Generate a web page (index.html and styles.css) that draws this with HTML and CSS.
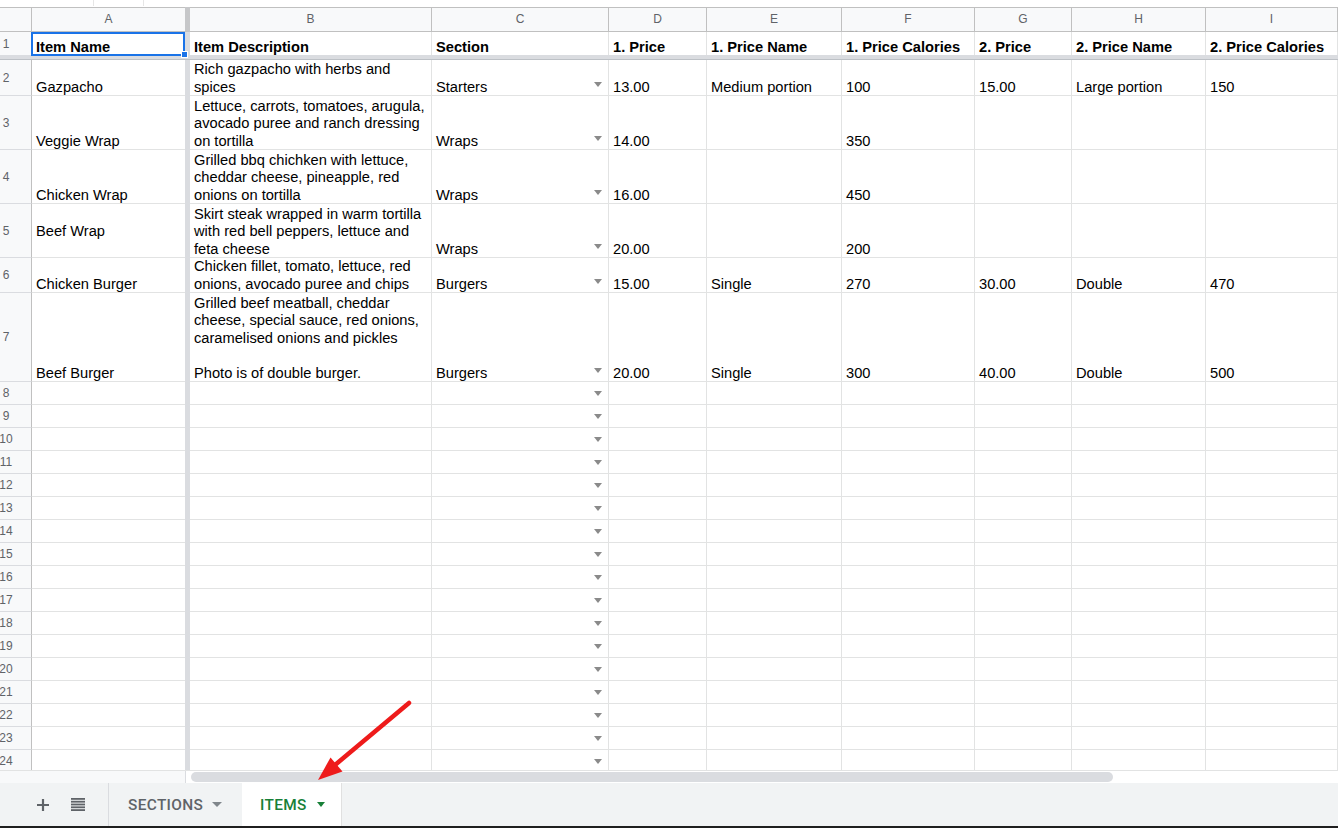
FILE: index.html
```html
<!DOCTYPE html>
<html lang="en">
<head>
    <meta charset="UTF-8">
    <meta name="viewport" content="width=device-width, initial-scale=1.0">
    <title>Menu - Items</title>
    <link rel="stylesheet" href="styles.css">
</head>
<body>
    <div class="toolbar-edge"><span class="edge-box"></span></div>

    <div class="sheet">
        <div class="row head-row">
            <div class="corner"></div>
            <div class="col-head frozen">A</div>
            <div class="col-head">B</div>
            <div class="col-head">C</div>
            <div class="col-head">D</div>
            <div class="col-head">E</div>
            <div class="col-head">F</div>
            <div class="col-head">G</div>
            <div class="col-head">H</div>
            <div class="col-head">I</div>
        </div>

        <div class="row r1">
            <div class="rh">1</div>
            <div class="c frozen sel">Item Name</div>
            <div class="c">Item Description</div>
            <div class="c">Section</div>
            <div class="c">1. Price</div>
            <div class="c">1. Price Name</div>
            <div class="c">1. Price Calories</div>
            <div class="c">2. Price</div>
            <div class="c">2. Price Name</div>
            <div class="c">2. Price Calories</div>
        </div>
        <div class="freeze-line"></div>

        <div class="row h36">
            <div class="rh">2</div>
            <div class="c frozen">Gazpacho</div>
            <div class="c">Rich gazpacho with herbs and<br>spices</div>
            <div class="c dd"><span>Starters</span><i class="caret"></i></div>
            <div class="c">13.00</div>
            <div class="c">Medium portion</div>
            <div class="c">100</div>
            <div class="c">15.00</div>
            <div class="c">Large portion</div>
            <div class="c">150</div>
        </div>
        <div class="row h54">
            <div class="rh">3</div>
            <div class="c frozen">Veggie Wrap</div>
            <div class="c">Lettuce, carrots, tomatoes, arugula,<br>avocado puree and ranch dressing<br>on tortilla</div>
            <div class="c dd"><span>Wraps</span><i class="caret"></i></div>
            <div class="c">14.00</div>
            <div class="c"></div>
            <div class="c">350</div>
            <div class="c"></div>
            <div class="c"></div>
            <div class="c"></div>
        </div>
        <div class="row h54">
            <div class="rh">4</div>
            <div class="c frozen">Chicken Wrap</div>
            <div class="c">Grilled bbq chichken with lettuce,<br>cheddar cheese, pineapple, red<br>onions on tortilla</div>
            <div class="c dd"><span>Wraps</span><i class="caret"></i></div>
            <div class="c">16.00</div>
            <div class="c"></div>
            <div class="c">450</div>
            <div class="c"></div>
            <div class="c"></div>
            <div class="c"></div>
        </div>
        <div class="row h54">
            <div class="rh">5</div>
            <div class="c frozen">Beef Wrap<br>&nbsp;</div>
            <div class="c">Skirt steak wrapped in warm tortilla<br>with red bell peppers, lettuce and<br>feta cheese</div>
            <div class="c dd"><span>Wraps</span><i class="caret"></i></div>
            <div class="c">20.00</div>
            <div class="c"></div>
            <div class="c">200</div>
            <div class="c"></div>
            <div class="c"></div>
            <div class="c"></div>
        </div>
        <div class="row h35">
            <div class="rh">6</div>
            <div class="c frozen">Chicken Burger</div>
            <div class="c">Chicken fillet, tomato, lettuce, red<br>onions, avocado puree and chips</div>
            <div class="c dd"><span>Burgers</span><i class="caret"></i></div>
            <div class="c">15.00</div>
            <div class="c">Single</div>
            <div class="c">270</div>
            <div class="c">30.00</div>
            <div class="c">Double</div>
            <div class="c">470</div>
        </div>
        <div class="row h89">
            <div class="rh">7</div>
            <div class="c frozen">Beef Burger</div>
            <div class="c">Grilled beef meatball, cheddar<br>cheese, special sauce, red onions,<br>caramelised onions and pickles<br>&nbsp;<br>Photo is of double burger.</div>
            <div class="c dd"><span>Burgers</span><i class="caret"></i></div>
            <div class="c">20.00</div>
            <div class="c">Single</div>
            <div class="c">300</div>
            <div class="c">40.00</div>
            <div class="c">Double</div>
            <div class="c">500</div>
        </div>

        <!-- empty rows -->
        <div class="row"><div class="rh">8</div><div class="c frozen"></div><div class="c"></div><div class="c dd"><i class="caret"></i></div><div class="c"></div><div class="c"></div><div class="c"></div><div class="c"></div><div class="c"></div><div class="c"></div></div>
        <div class="row"><div class="rh">9</div><div class="c frozen"></div><div class="c"></div><div class="c dd"><i class="caret"></i></div><div class="c"></div><div class="c"></div><div class="c"></div><div class="c"></div><div class="c"></div><div class="c"></div></div>
        <div class="row"><div class="rh">10</div><div class="c frozen"></div><div class="c"></div><div class="c dd"><i class="caret"></i></div><div class="c"></div><div class="c"></div><div class="c"></div><div class="c"></div><div class="c"></div><div class="c"></div></div>
        <div class="row"><div class="rh">11</div><div class="c frozen"></div><div class="c"></div><div class="c dd"><i class="caret"></i></div><div class="c"></div><div class="c"></div><div class="c"></div><div class="c"></div><div class="c"></div><div class="c"></div></div>
        <div class="row"><div class="rh">12</div><div class="c frozen"></div><div class="c"></div><div class="c dd"><i class="caret"></i></div><div class="c"></div><div class="c"></div><div class="c"></div><div class="c"></div><div class="c"></div><div class="c"></div></div>
        <div class="row"><div class="rh">13</div><div class="c frozen"></div><div class="c"></div><div class="c dd"><i class="caret"></i></div><div class="c"></div><div class="c"></div><div class="c"></div><div class="c"></div><div class="c"></div><div class="c"></div></div>
        <div class="row"><div class="rh">14</div><div class="c frozen"></div><div class="c"></div><div class="c dd"><i class="caret"></i></div><div class="c"></div><div class="c"></div><div class="c"></div><div class="c"></div><div class="c"></div><div class="c"></div></div>
        <div class="row"><div class="rh">15</div><div class="c frozen"></div><div class="c"></div><div class="c dd"><i class="caret"></i></div><div class="c"></div><div class="c"></div><div class="c"></div><div class="c"></div><div class="c"></div><div class="c"></div></div>
        <div class="row"><div class="rh">16</div><div class="c frozen"></div><div class="c"></div><div class="c dd"><i class="caret"></i></div><div class="c"></div><div class="c"></div><div class="c"></div><div class="c"></div><div class="c"></div><div class="c"></div></div>
        <div class="row"><div class="rh">17</div><div class="c frozen"></div><div class="c"></div><div class="c dd"><i class="caret"></i></div><div class="c"></div><div class="c"></div><div class="c"></div><div class="c"></div><div class="c"></div><div class="c"></div></div>
        <div class="row"><div class="rh">18</div><div class="c frozen"></div><div class="c"></div><div class="c dd"><i class="caret"></i></div><div class="c"></div><div class="c"></div><div class="c"></div><div class="c"></div><div class="c"></div><div class="c"></div></div>
        <div class="row"><div class="rh">19</div><div class="c frozen"></div><div class="c"></div><div class="c dd"><i class="caret"></i></div><div class="c"></div><div class="c"></div><div class="c"></div><div class="c"></div><div class="c"></div><div class="c"></div></div>
        <div class="row"><div class="rh">20</div><div class="c frozen"></div><div class="c"></div><div class="c dd"><i class="caret"></i></div><div class="c"></div><div class="c"></div><div class="c"></div><div class="c"></div><div class="c"></div><div class="c"></div></div>
        <div class="row"><div class="rh">21</div><div class="c frozen"></div><div class="c"></div><div class="c dd"><i class="caret"></i></div><div class="c"></div><div class="c"></div><div class="c"></div><div class="c"></div><div class="c"></div><div class="c"></div></div>
        <div class="row"><div class="rh">22</div><div class="c frozen"></div><div class="c"></div><div class="c dd"><i class="caret"></i></div><div class="c"></div><div class="c"></div><div class="c"></div><div class="c"></div><div class="c"></div><div class="c"></div></div>
        <div class="row"><div class="rh">23</div><div class="c frozen"></div><div class="c"></div><div class="c dd"><i class="caret"></i></div><div class="c"></div><div class="c"></div><div class="c"></div><div class="c"></div><div class="c"></div><div class="c"></div></div>
        <div class="row"><div class="rh">24</div><div class="c frozen"></div><div class="c"></div><div class="c dd"><i class="caret"></i></div><div class="c"></div><div class="c"></div><div class="c"></div><div class="c"></div><div class="c"></div><div class="c"></div></div>
    </div>

    <div class="scroll-row">
        <div class="scroll-left"></div>
        <div class="scroll-track"><div class="scroll-thumb"></div></div>
    </div>

    <div class="tab-bar">
        <div class="tab-tools">
            <svg class="tool" width="12" height="12" viewBox="0 0 12 12">
                <path d="M6 0v12M0 6h12" stroke="#5f6368" stroke-width="2.2" fill="none"/>
            </svg>
            <svg class="tool" width="14" height="13" viewBox="0 0 14 13">
                <rect x="0" y="0" width="14" height="1.8" fill="#5f6368"/>
                <rect x="0" y="2.8" width="14" height="1.8" fill="#5f6368"/>
                <rect x="0" y="5.6" width="14" height="1.8" fill="#5f6368"/>
                <rect x="0" y="8.4" width="14" height="1.8" fill="#5f6368"/>
                <rect x="0" y="11.2" width="14" height="1.8" fill="#5f6368"/>
            </svg>
        </div>
        <div class="tab">SECTIONS<i class="tab-caret"></i></div>
        <div class="tab active">ITEMS<i class="tab-caret"></i></div>
    </div>
    <div class="bottom-edge"></div>

    <svg class="pointer" width="1338" height="828" viewBox="0 0 1338 828">
        <path d="M409 703 L335 765" stroke="#ee1b1b" stroke-width="4.5" stroke-linecap="round" fill="none"/>
        <polygon points="318,780 342.5,771.5 330.5,757.5" fill="#ee1b1b"/>
    </svg>
</body>
</html>
```

FILE: styles.css
```css
body {
    margin: 0;
    width: 1338px;
    height: 828px;
    overflow: hidden;
    position: relative;
    background: #fff;
    font-family: "Liberation Sans", Arial, sans-serif;
    color: #000;
}

/* bit of the toolbar cut off at the top */
.toolbar-edge {
    height: 7px;
    padding-left: 93px;
}

.edge-box {
    display: inline-block;
    vertical-align: top;
    width: 49px;
    height: 6px;
    border-left: 1px solid #e6e6e6;
    border-right: 1px solid #e6e6e6;
}

/* grid */
.sheet {
    height: 763px;
    overflow: hidden;
}

.row {
    display: grid;
    grid-template-columns: 32px 158px 242px 177px 98px 135px 133px 97px 134px 132px;
    height: 23px;
}

.head-row { height: 25px; }
.r1 { height: 24px; }
.h35 { height: 35px; }
.h36 { height: 36px; }
.h54 { height: 54px; }
.h89 { height: 89px; }

.corner,
.col-head {
    box-sizing: border-box;
    background: #f8f9fa;
    border-right: 1px solid #c0c0c0;
    border-bottom: 1px solid #c0c0c0;
    box-shadow: inset 0 1px #c0c0c0;
}

.col-head {
    display: flex;
    align-items: center;
    justify-content: center;
    font-size: 12px;
    color: #5f6368;
}

.col-head.frozen {
    border-right: 5px solid #c6c7c9;
}

.rh {
    box-sizing: border-box;
    background: #f8f9fa;
    border-right: 1px solid #c0c0c0;
    border-bottom: 1px solid #dadce0;
    display: flex;
    align-items: center;
    justify-content: center;
    padding-right: 19px;
    font-size: 12px;
    color: #5f6368;
}

/* grid line drawn as inset shadow so the text sits on the bottom pixel */
.c {
    box-sizing: border-box;
    border-right: 1px solid #e2e3e3;
    box-shadow: inset 0 -1px #e2e3e3;
    padding: 0 3px 0 4px;
    display: flex;
    align-items: flex-end;
    font-size: 14.67px;
    line-height: 17.5px;
    white-space: nowrap;
}

.c.frozen {
    border-right: 5px solid #dadce0;
}

.r1 .c {
    font-weight: bold;
    box-shadow: none;
}

.r1 .rh {
    border-bottom: 0;
    padding-bottom: 1px;
}

/* frozen row divider, overlaps the last pixel of row 1 */
.freeze-line {
    position: relative;
    height: 5px;
    margin-top: -1px;
    box-sizing: border-box;
    background: #dadce0;
    border-bottom: 1px solid #bdc1c6;
}

/* selected cell A1 */
.sel {
    position: relative;
    z-index: 1;
}

.sel::before {
    content: '';
    position: absolute;
    left: -1px;
    top: 0;
    right: 0;
    bottom: 0;
    border: 2px solid #1a73e8;
}

.sel::after {
    content: '';
    position: absolute;
    right: -3px;
    bottom: -2px;
    width: 5px;
    height: 5px;
    background: #1a73e8;
    border: 1px solid #fff;
}

/* dropdown chips in Section column */
.caret {
    margin-left: auto;
    margin-right: 3px;
    margin-bottom: 9px;
    width: 0;
    height: 0;
    border-left: 4.5px solid transparent;
    border-right: 4.5px solid transparent;
    border-top: 5px solid #8a8a8a;
}

/* horizontal scroll bar */
.scroll-row {
    display: flex;
    height: 13px;
    box-sizing: border-box;
    border-top: 1px solid #e2e3e3;
}

.scroll-left {
    width: 186px;
    box-sizing: border-box;
    background: #f8f9fa;
    border-right: 1px solid #dadce0;
}

.scroll-track {
    flex: 1;
    padding: 1px 0 0 5px;
}

.scroll-thumb {
    width: 922px;
    height: 10px;
    border-radius: 5px;
    background: #dadce0;
}

/* sheet tabs */
.tab-bar {
    display: flex;
    height: 43px;
    background: #f1f3f4;
}

.tab-tools {
    width: 109px;
    box-sizing: border-box;
    border-right: 1px solid #dadce0;
    display: flex;
    align-items: center;
    padding-left: 37px;
    gap: 22px;
}

.tab {
    width: 133px;
    box-sizing: border-box;
    padding-left: 19px;
    display: flex;
    align-items: center;
    font-family: Roboto, "Liberation Sans", sans-serif;
    font-weight: 500;
    font-size: 15.4px;
    letter-spacing: 0.35px;
    color: #5f6368;
}

.tab-caret {
    margin-left: 9px;
    width: 0;
    height: 0;
    border-left: 5px solid transparent;
    border-right: 5px solid transparent;
    border-top: 5px solid #80868b;
}

.tab.active {
    width: 100px;
    padding-left: 18px;
    background: #fff;
    color: #188038;
    border-right: 1px solid #e0e0e0;
}

.tab.active .tab-caret {
    margin-left: 10px;
    border-left-width: 4.5px;
    border-right-width: 4.5px;
    border-top-color: #188038;
}

.bottom-edge {
    height: 2px;
    background: #1f1f1f;
}

/* red annotation arrow lying over the page */
.pointer {
    position: absolute;
    left: 0;
    top: 0;
    pointer-events: none;
}
```
